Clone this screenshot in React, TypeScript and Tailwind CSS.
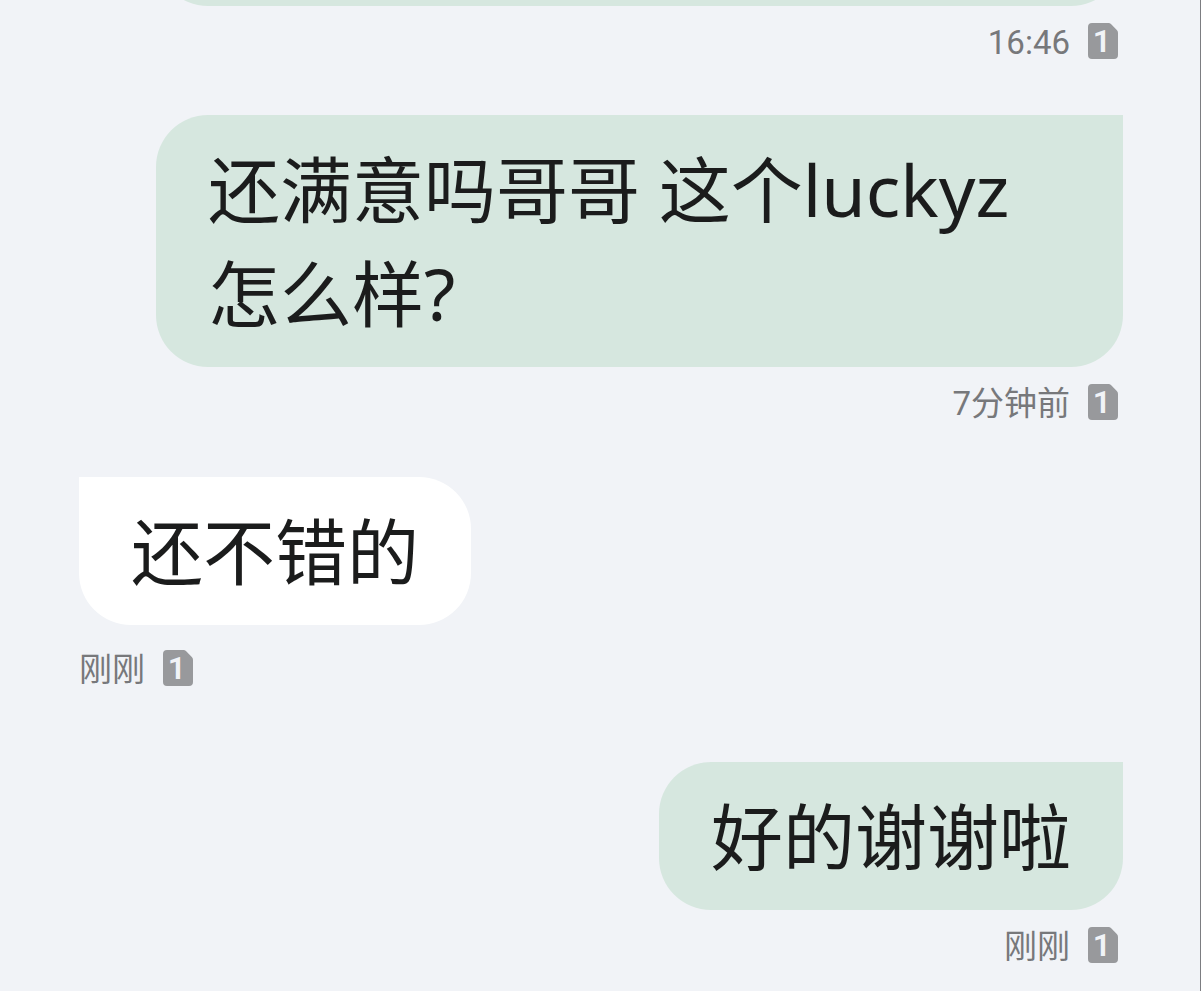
import React from 'react';
import clsx from 'clsx';

interface Message {
  id: number;
  text: string;
  time: string;
  sent: boolean;
}

const messages: Message[] = [
  { id: 1, text: '还满意吗哥哥 这个luckyz怎么样?', time: '7分钟前', sent: true },
  { id: 2, text: '还不错的', time: '刚刚', sent: false },
  { id: 3, text: '好的谢谢啦', time: '刚刚', sent: true },
];

function SimIcon() {
  return (
    <svg width="30" height="36" viewBox="0 0 30 36" className="shrink-0" role="img" aria-label="SIM 1">
      <path
        d="M4 0H20.5Q22 0 23.2 1.2L28.8 7Q30 8.2 30 10V32Q30 36 26 36H4Q0 36 0 32V4Q0 0 4 0Z"
        fill="#98999c"
      />
      <text
        x="14"
        y="29"
        textAnchor="middle"
        fill="#f1f3f7"
        className="font-['Roboto','Liberation_Sans',sans-serif] text-[32px] font-semibold"
      >
        1
      </text>
    </svg>
  );
}

function Meta({ time, sent }: { time: string; sent: boolean }) {
  return (
    <div className={clsx('flex h-9 items-center gap-[18px]', sent ? 'mt-[17px] pr-[5px]' : 'mt-[25px]')}>
      <time className="pt-1 font-['Roboto','Noto_Sans_CJK_SC',sans-serif] text-[33px] leading-9 text-[#77787b]">
        {time}
      </time>
      <SimIcon />
    </div>
  );
}

function MessageItem({ message }: { message: Message }) {
  const { text, time, sent } = message;
  return (
    <li className={clsx('flex flex-col', sent ? 'mb-[57px] items-end pl-[77px]' : 'mb-[76px] items-start pr-[77px]')}>
      <p
        className={clsx(
          'rounded-[52px] px-[52px] py-[22px] text-[72px] leading-[104px] text-[#1b1c1c]',
          sent ? 'rounded-tr-none bg-[#d6e7df]' : 'rounded-tl-none bg-white'
        )}
      >
        {text}
      </p>
      <Meta time={time} sent={sent} />
    </li>
  );
}

export default function App() {
  return (
    <main className="min-h-screen overflow-hidden border-r border-[#7c7d81] bg-[#f1f3f7] pl-[79px] pr-[77px] font-['Noto_Sans','Noto_Sans_CJK_SC',sans-serif]">
      {/* Tail of the previous message, scrolled past the top edge */}
      <div className="mb-14 flex flex-col items-end pl-[77px]">
        <div className="flex h-1.5 w-full items-end overflow-hidden">
          <div className="h-[148px] w-full rounded-[52px] rounded-tr-none bg-[#d6e7df]" />
        </div>
        <Meta time="16:46" sent />
      </div>

      {/* Conversation */}
      <ul className="-mb-[57px]">
        {messages.map((message) => (
          <MessageItem key={message.id} message={message} />
        ))}
      </ul>
    </main>
  );
}
